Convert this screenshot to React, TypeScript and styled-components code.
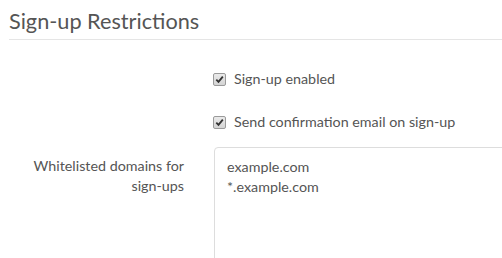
import React from 'react';
import styled, { createGlobalStyle } from 'styled-components';

const GlobalStyle = createGlobalStyle`
html, body {
  margin: 0;
  padding: 0;
  background: #fff;
  overflow: hidden;
}
body {
  font-family: Lato, "Open Sans", sans-serif;
  font-size: 14.3px;
  color: #555;
}
`;

const Page = styled.div`
padding: 0 0 0 9px;
width: 493px;
height: 258px;
overflow: hidden;
`;

const Legend = styled.h2`
margin: 0;
padding: 9px 0 5px;
font-size: 21.7px;
font-weight: 400;
line-height: 25px;
color: #555;
border-bottom: 1px solid #e5e5e5;
`;

const Form = styled.div`
display: flex;
flex-direction: column;
padding-top: 29px;
`;

const Group = styled.div<{ $gap?: number }>`
display: flex;
align-items: flex-start;
margin-bottom: ${p => p.$gap ?? 0}px;
`;

const LabelCol = styled.label`
width: 175px;
flex: none;
padding-right: 15px;
text-align: right;
line-height: 20px;
padding-top: 9px;
`;

const ControlCol = styled.div`
flex: 1;
padding-left: 15px;
`;

const CheckRow = styled.label`
display: flex;
align-items: center;
gap: 8px;
height: 20px;
line-height: 20px;
margin-left: -1px;
`;

const Box = styled.span`
display: inline-flex;
align-items: center;
justify-content: center;
width: 11px;
height: 11px;
border: 1px solid #9a9a9a;
border-radius: 2px;
background: linear-gradient(#eaeaea, #d4d4d4);
`;

const TextArea = styled.div`
width: 400px;
height: 140px;
padding: 9px 12px 8px;
border: 1px solid #ddd;
border-radius: 4px;
line-height: 20px;
color: #555;
`;

const Check = () => (
  <Box>
    <svg width="9" height="9" viewBox="0 0 9 9">
      <path d="M1.3 4.6 L3.5 6.9 L7.8 1.6" fill="none" stroke="#333" strokeWidth="1.8" />
    </svg>
  </Box>
);

const App = () => (
  <>
    <GlobalStyle />
    <Page>
      <Legend>Sign-up Restrictions</Legend>
      <Form>
        <Group $gap={23}>
          <LabelCol as="div" />
          <ControlCol>
            <CheckRow>
              <Check />
              Sign-up enabled
            </CheckRow>
          </ControlCol>
        </Group>
        <Group $gap={15}>
          <LabelCol as="div" />
          <ControlCol>
            <CheckRow>
              <Check />
              Send confirmation email on sign-up
            </CheckRow>
          </ControlCol>
        </Group>
        <Group>
          <LabelCol>
            Whitelisted domains for
            <br />
            sign-ups
          </LabelCol>
          <ControlCol>
            <TextArea>
              example.com
              <br />
              *.example.com
            </TextArea>
          </ControlCol>
        </Group>
      </Form>
    </Page>
  </>
);

export default App;
